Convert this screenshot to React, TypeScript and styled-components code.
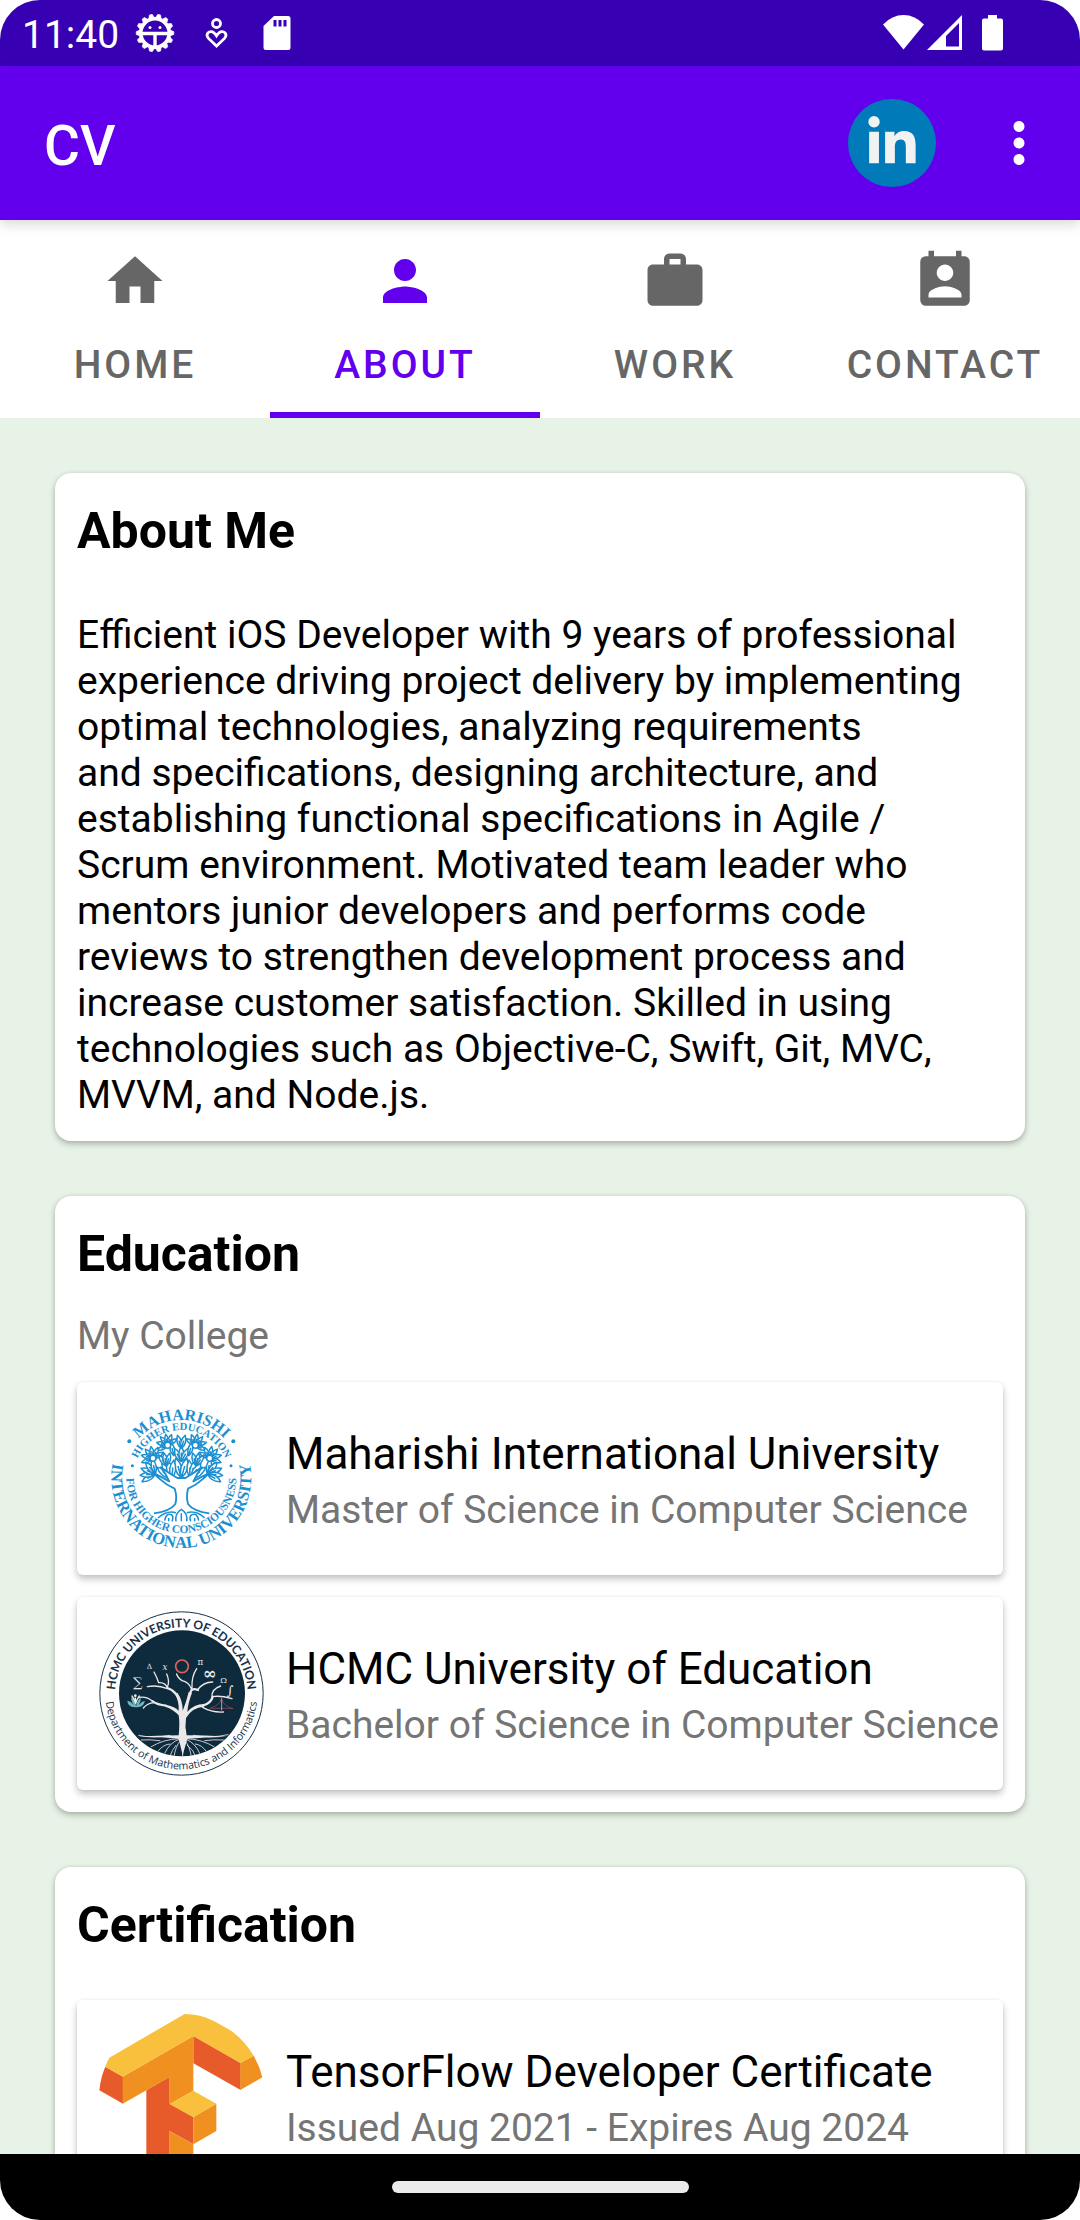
import React from "react";
import styled, { createGlobalStyle } from "styled-components";
import {
  MdHome,
  MdPerson,
  MdWork,
  MdPermContactCalendar,
  MdMoreVert,
} from "react-icons/md";
import { FaLinkedinIn } from "react-icons/fa";

const GlobalStyle = createGlobalStyle`
  *, *::before, *::after { box-sizing: border-box; }
  html, body { margin: 0; background: #fff; }
  body, button { font-family: Roboto, "Liberation Sans", sans-serif; }
  h1, h2, h3, p, ul { margin: 0; padding: 0; font-weight: 400; }
`;

const Screen = styled.div`
  height: 100vh;
  display: flex;
  flex-direction: column;
  overflow: hidden;
  border-radius: 40px;
  background: #e8f3e7;
  color: #000;
`;

const StatusBar = styled.div`
  height: 66px;
  flex: none;
  display: flex;
  align-items: center;
  justify-content: space-between;
  padding: 0 66px 0 22px;
  background: #3700b3;
  color: #fff;
`;

const StatusGroup = styled.div`
  display: flex;
  align-items: center;
`;

const Clock = styled.time`
  padding-top: 3px;
  margin-right: 16px;
  font-size: 39px;
  line-height: 46px;
`;

const Notifications = styled.div`
  display: flex;
  gap: 21px;
`;

const AppBar = styled.header`
  height: 154px;
  flex: none;
  position: relative;
  z-index: 1;
  display: flex;
  align-items: center;
  justify-content: space-between;
  padding: 0 28px 0 44px;
  background: #6200ee;
  color: #fff;
  box-shadow: 0 4px 12px rgba(0, 0, 0, 0.16);
`;

const AppTitle = styled.h1`
  padding-top: 6px;
  font-size: 55px;
  line-height: 64px;
  font-weight: 500;
`;

const Actions = styled.div`
  display: flex;
  align-items: center;
  gap: 50px;
`;

const ProfileLink = styled.a`
  width: 88px;
  height: 88px;
  display: grid;
  place-items: center;
  border-radius: 50%;
  background: #007ab9;
  color: #f1f2f2;
`;

const MenuButton = styled.button`
  display: flex;
  padding: 0;
  border: 0;
  background: none;
  color: inherit;
`;

const TabList = styled.nav`
  flex: none;
  display: grid;
  grid-template-columns: repeat(4, 1fr);
  background: #fff;
`;

const Tab = styled.button<{ $active: boolean }>`
  height: 198px;
  display: flex;
  flex-direction: column;
  align-items: center;
  gap: 28px;
  padding: 28px 0 0;
  border: 0;
  border-bottom: 6px solid ${(p) => (p.$active ? "#6200ee" : "transparent")};
  background: none;
  color: ${(p) => (p.$active ? "#6200ee" : "#666")};
  font-size: 39px;
  line-height: 46px;
  font-weight: 500;
  letter-spacing: 3px;
  text-transform: uppercase;
`;

const Content = styled.main`
  flex: 1;
  min-height: 0;
  overflow-y: auto;
  scrollbar-width: none;
  display: flex;
  flex-direction: column;
  gap: 55px;
  padding: 55px;
`;

const Card = styled.section`
  flex: none;
  padding: 25px 22px 22px;
  border-radius: 16px;
  background: #fff;
  box-shadow: 0 3px 6px rgba(0, 0, 0, 0.25), 0 0 4px rgba(0, 0, 0, 0.08);
`;

const CardTitle = styled.h2`
  font-size: 50px;
  line-height: 66px;
  font-weight: 700;
`;

const Summary = styled.p`
  margin: 48px 0 1px;
  font-size: 39px;
  line-height: 46px;
`;

const Caption = styled.p`
  margin-top: 26px;
  color: #757575;
  font-size: 39px;
  line-height: 46px;
`;

const Entries = styled.ul<{ $offset: number }>`
  margin-top: ${(p) => p.$offset}px;
  display: flex;
  flex-direction: column;
  gap: 22px;
  list-style: none;
`;

const Entry = styled.li`
  display: flex;
  align-items: center;
  gap: 22px;
  padding: 14px 0 14px 22px;
  border-radius: 6px;
  background: #fff;
  box-shadow: 0 4px 7px rgba(0, 0, 0, 0.24), 0 0 3px rgba(0, 0, 0, 0.06);
`;

const EntryText = styled.div`
  display: flex;
  flex-direction: column;
  gap: 4px;
  white-space: nowrap;
`;

const EntryTitle = styled.h3`
  font-size: 44px;
  line-height: 58px;
`;

const EntryDetail = styled.p`
  color: #757575;
  font-size: 39px;
  line-height: 46px;
`;

const Logo = styled.svg`
  width: 165px;
  height: 165px;
  flex: none;
`;

const GestureBar = styled.div`
  height: 66px;
  flex: none;
  display: grid;
  place-items: center;
  background: #000;
`;

const GestureHandle = styled.div`
  width: 297px;
  height: 12px;
  border-radius: 6px;
  background: #ebebeb;
`;

/* ---- status icons ---- */

const BugGearIcon = () => (
  <svg width="40" height="40" viewBox="0 0 40 40" fill="none" stroke="#fff">
    {Array.from({ length: 14 }, (_, i) => (
      <path
        key={i}
        d="M17 5 L18.6 1.2 H21.4 L23 5 Z"
        fill="#fff"
        strokeWidth="0.6"
        transform={`rotate(${(i + 0.5) * (360 / 14)} 20 20)`}
      />
    ))}
    <circle cx="20" cy="20" r="14.2" strokeWidth="3.6" />
    <path d="M6 20.5 H34 M20 21 V35" strokeWidth="3.4" />
    <circle cx="15" cy="14.5" r="1.5" fill="#fff" stroke="none" />
    <circle cx="25" cy="14.5" r="1.5" fill="#fff" stroke="none" />
  </svg>
);

const HeartPersonIcon = () => (
  <svg width="40" height="40" viewBox="0 0 40 40" fill="none" stroke="#fff" strokeWidth="2.8">
    <circle cx="20.5" cy="10.5" r="4" />
    <path d="M20.500 33 L12.500 25.400 C9.300 21.800 12 18.200 15.500 18.600 C17.900 19 19.100 20.600 20.500 22.800 C21.900 20.600 23.100 19 25.500 18.600 C29 18.200 31.700 21.800 28.500 25.400 Z" />
  </svg>
);

const SdCardIcon = () => (
  <svg width="40" height="40" viewBox="0 0 40 40">
    <path
      fill="#fff"
      fillRule="evenodd"
      d="M17 3 H31 Q33.5 3 33.5 5.5 V34.500 Q33.500 37 31 37 H9 Q6.500 37 6.500 34.500 V13 Z M16.500 7 V13.500 H19.500 V7 Z M21.500 7 V13.500 H24.500 V7 Z M26.500 7 V13.500 H29.500 V7 Z"
    />
  </svg>
);

const WifiIcon = () => (
  <svg width="44" height="44" viewBox="0 0 44 44">
    <path fill="#fff" d="M1 13.500 Q10 4 21.500 4 Q33 4 42 13.500 L21.500 38.500 Z" />
  </svg>
);

const SignalIcon = () => (
  <svg width="44" height="44" viewBox="0 0 44 44">
    <path
      fill="#fff"
      fillRule="evenodd"
      d="M1 39 L36 4 V39 Z M20 25 V35.500 H33 V12 Z"
    />
  </svg>
);

const BatteryIcon = () => (
  <svg width="44" height="44" viewBox="0 0 44 44">
    <path
      fill="#fff"
      d="M18 4 H27 V7.500 H31 Q33 7.500 33 9.500 V37.500 Q33 39.500 31 39.500 H14 Q12 39.500 12 37.500 V9.500 Q12 7.500 14 7.500 H18 Z"
    />
  </svg>
);

/* ---- logos ---- */

type Fan = { x: number; y: number; size: number; angles: number[] };

const FANS: Fan[] = [
  { x: 334, y: 324, size: 62, angles: [-16, 16] },
  { x: 334, y: 275, size: 46, angles: [-28, 0, 28] },
  { x: 334, y: 236, size: 42, angles: [-16, 16] },
  { x: 312, y: 258, size: 42, angles: [-14] },
  { x: 356, y: 258, size: 42, angles: [14] },
  { x: 293, y: 226, size: 34, angles: [-115, -75, -40, -10, 20, 55] },
  { x: 376, y: 226, size: 34, angles: [-55, -20, 10, 40, 75, 115] },
  { x: 249, y: 265, size: 36, angles: [-110, -75, -40, -10, 25, 60] },
  { x: 419, y: 265, size: 36, angles: [-60, -25, 10, 40, 75, 110] },
  { x: 256, y: 312, size: 46, angles: [-120, -95, -68, -40, -12] },
  { x: 412, y: 312, size: 46, angles: [12, 40, 68, 95, 120] },
  { x: 305, y: 326, size: 56, angles: [-52, -32, -12, 6] },
  { x: 363, y: 326, size: 56, angles: [-6, 12, 32, 52] },
  { x: 290, y: 288, size: 40, angles: [-36, -12, 14] },
  { x: 378, y: 288, size: 40, angles: [-14, 12, 36] },
];

const leafPath = (s: number) =>
  `M0 0 C${-s * 0.26} ${-s * 0.4} ${-s * 0.18} ${-s * 0.72} 0 ${-s} C${s * 0.18} ${-s * 0.72} ${s * 0.26} ${-s * 0.4} 0 0 M0 0 V${-s * 0.6}`;

const MaharishiLogo = () => (
  <Logo viewBox="87 78 495 495" role="img" aria-label="Maharishi International University seal">
    <defs>
      <path id="miu-outer-top" d="M160 324 A174 174 0 0 1 508 324" />
      <path id="miu-outer-bottom" d="M334 114 A210 210 0 0 0 334 534 A210 210 0 0 0 334 114" />
      <path id="miu-inner-top" d="M190 324 A144 144 0 0 1 478 324" />
      <path id="miu-inner-bottom" d="M334 159 A165 165 0 0 0 334 489 A165 165 0 0 0 334 159" />
    </defs>
    <g
      fill="#1c8fd0"
      fontFamily='"Liberation Serif", serif'
      fontWeight="700"
      textAnchor="middle"
    >
      <text fontSize="48">
        <textPath href="#miu-outer-top" startOffset="50%">MAHARISHI</textPath>
      </text>
      <text fontSize="50">
        <textPath href="#miu-outer-bottom" startOffset="50%">INTERNATIONAL UNIVERSITY</textPath>
      </text>
      <text fontSize="32">
        <textPath href="#miu-inner-top" startOffset="50%">HIGHER EDUCATION</textPath>
      </text>
      <text fontSize="34">
        <textPath href="#miu-inner-bottom" startOffset="50%">FOR HIGHER CONSCIOUSNESS</textPath>
      </text>
      <circle cx="178" cy="214" r="6" />
      <circle cx="490" cy="214" r="6" />
      <circle cx="187" cy="287" r="4.500" />
      <circle cx="483" cy="287" r="4.500" />
    </g>
    <g fill="#fff" stroke="#1c8fd0" strokeWidth="4.500" strokeLinejoin="round">
      {FANS.map((fan) =>
        fan.angles.map((angle) => (
          <path
            key={`${fan.x}-${fan.y}-${angle}`}
            d={leafPath(fan.size)}
            transform={`translate(${fan.x} ${fan.y}) rotate(${angle})`}
          />
        ))
      )}
      <path
        strokeWidth="5.500"
        d="M252 430 Q300 424 316 402 Q322 380 314 356 Q290 346 268 326 L248 308 Q276 322 298 334 Q286 308 272 292 Q300 312 322 324 H346 Q368 312 396 292 Q382 308 370 334 Q392 322 420 308 L400 326 Q378 346 354 356 Q348 380 354 402 Q370 424 418 430"
      />
      <circle cx="293" cy="226" r="9" />
      <circle cx="376" cy="226" r="9" />
      <circle cx="249" cy="265" r="9" />
      <circle cx="419" cy="265" r="9" />
      <path
        fill="none"
        strokeWidth="4.500"
        d="M264 444 Q290 420 318 428 M284 452 Q288 428 304 434 Q312 440 306 454 M318 454 Q314 430 334 418 Q354 430 350 454 M334 454 V430 M362 454 Q356 440 366 434 Q382 428 386 452 M404 444 Q380 420 350 428 M296 454 V444 M374 454 V444"
      />
    </g>
  </Logo>
);

const HcmcLogo = () => (
  <Logo viewBox="87 63 495 495" role="img" aria-label="HCMC University of Education seal">
    <defs>
      <path id="hcmc-top" d="M334 510 A199 199 0 0 1 334 112 A199 199 0 0 1 334 510" />
      <path id="hcmc-bottom" d="M334 82 A228 228 0 0 0 334 538 A228 228 0 0 0 334 82" />
      <clipPath id="hcmc-disc">
        <circle cx="336" cy="310" r="189" />
      </clipPath>
    </defs>
    <circle cx="334.500" cy="310.500" r="245" fill="#fff" stroke="#17304a" strokeWidth="3" />
    <circle cx="336" cy="310" r="189" fill="#0d2b3d" />
    <g fill="#17304a" textAnchor="middle">
      <text fontSize="36" fontFamily="Lato, sans-serif" fontWeight="700">
        <textPath href="#hcmc-top" startOffset="50%">HCMC UNIVERSITY OF EDUCATION</textPath>
      </text>
      <text fontSize="32" fontFamily='"Open Sans", sans-serif'>
        <textPath href="#hcmc-bottom" startOffset="50%">Department of Mathematics and Informatics</textPath>
      </text>
    </g>
    <g clipPath="url(#hcmc-disc)" fill="none" stroke="#ece8ea" strokeLinecap="round">
      <path
        fill="#ece8ea"
        stroke="none"
        d="M326 436 Q330 400 326 376 Q310 358 286 350 L290 345 Q314 350 326 362 Q328 334 314 312 L322 308 Q338 330 338 362 Q346 344 356 306 L366 308 Q354 340 352 366 Q372 342 402 342 L402 350 Q366 352 348 384 Q344 410 350 436 Q400 436 470 440 Q400 442 352 446 L338 496 L326 446 Q280 440 204 440 Q290 436 326 436 Z"
      />
      <path
        strokeWidth="7"
        d="M318 312 Q306 298 292 294 M361 308 Q364 292 384 300 M288 347 Q262 344 248 334 M400 346 Q424 338 428 320"
      />
      <path
        strokeWidth="4"
        d="M294 296 Q286 276 266 278 Q260 260 252 246 M292 296 Q264 284 232 290 M292 292 Q300 274 290 252 M364 296 Q356 276 336 272 Q322 262 320 252 M366 294 Q364 260 380 236 M382 300 Q400 276 428 276 M248 334 Q230 318 206 322 M252 338 Q232 340 220 354 M426 320 Q424 298 452 288 M428 320 Q450 316 486 326 M398 352 Q426 368 460 366"
      />
      <path
        strokeWidth="2.500"
        d="M328 448 Q300 456 284 490 M332 450 Q316 470 312 500 M338 450 V500 M344 450 Q360 470 364 500 M348 448 Q376 458 390 492 M326 446 Q280 448 244 470 M350 446 Q396 448 432 470 M300 462 Q280 462 262 486 M376 462 Q396 464 410 486 M270 452 Q240 448 214 450 M404 452 Q430 448 462 450 M318 466 Q306 480 300 498 M352 466 Q372 480 376 498 M206 436 Q250 446 300 436 M370 436 Q420 446 474 434"
      />
      <circle cx="336" cy="229" r="19" stroke="#d9625c" strokeWidth="5" />
      <path stroke="#a4505a" strokeWidth="2" d="M422 354 Q450 346 454 326 Q462 350 488 356 M422 355 H488" />
      <path strokeWidth="2" d="M455 326 V360" />
      <path
        fill="#6fb6bd"
        stroke="none"
        d="M194 352 Q172 350 172 332 Q184 334 192 346 Q182 332 184 322 Q198 334 198 350 Q200 334 212 322 Q214 334 206 346 Q214 334 224 332 Q224 350 202 352 Z"
      />
      <path strokeWidth="4" d="M197 340 Q192 326 186 318 M197 340 Q200 328 208 318 M196 334 V324" />
      <circle cx="196" cy="317" r="4" fill="#ece8ea" stroke="none" />
    </g>
    <g fill="#ece8ea" fontFamily='"DejaVu Serif", serif' textAnchor="middle">
      <text x="238" y="236" fontSize="22">Δ</text>
      <text x="285" y="241" fontSize="26" fontStyle="italic">x</text>
      <text x="391" y="226" fontSize="26">π</text>
      <text x="419" y="267" fontSize="50" fontWeight="700">∞</text>
      <text x="461" y="280" fontSize="24">Ω</text>
      <text x="480" y="316" fontSize="38">∫</text>
      <text x="203" y="291" fontSize="40">∑</text>
    </g>
  </Logo>
);

const TensorFlowLogo = () => (
  <Logo viewBox="116 102 495 495" role="img" aria-label="TensorFlow logo">
    <path fill="#e75b2b" d="M135 260 L188 290 V371 L117 331 Q121 292 135 260 Z" />
    <path fill="#e75b2b" d="M258 331 L328 290 V371 L399 411 V493 L328 453 V590 L258 550 Z" />
    <path fill="#e75b2b" d="M399 168 L541 249 V330 L399 250 Z" />
    <path fill="#f09020" d="M187 290 L399 168 V332 L328 373 V291 L187 371 Z" />
    <path fill="#f09020" d="M399 411 L468 371 V453 L399 493 Z M328 453 L399 493 V550 L328 590 Z" />
    <path fill="#f09020" d="M540 249 L580 227 Q598 258 606 292 L540 330 Z" />
    <path
      fill="#f8c03c"
      d="M147 233 L373 102 Q420 102 462 124 L510 151 Q550 178 580 227 L540 249 L399 168 L187 290 L135 260 Q140 245 147 233 Z M328 373 L399 332 L468 371 L399 411 Z"
    />
  </Logo>
);

/* ---- page ---- */

const TABS = [
  { label: "Home", Icon: MdHome },
  { label: "About", Icon: MdPerson },
  { label: "Work", Icon: MdWork },
  { label: "Contact", Icon: MdPermContactCalendar },
];

const SCHOOLS = [
  {
    title: "Maharishi International University",
    detail: "Master of Science in Computer Science",
    LogoArt: MaharishiLogo,
  },
  {
    title: "HCMC University of Education",
    detail: "Bachelor of Science in Computer Science",
    LogoArt: HcmcLogo,
  },
];

const CERTIFICATES = [
  {
    title: "TensorFlow Developer Certificate",
    detail: "Issued Aug 2021 - Expires Aug 2024",
    LogoArt: TensorFlowLogo,
  },
];

const EntryList = ({ items, offset }: { items: typeof SCHOOLS; offset: number }) => (
  <Entries $offset={offset}>
    {items.map(({ title, detail, LogoArt }) => (
      <Entry key={title}>
        <LogoArt />
        <EntryText>
          <EntryTitle>{title}</EntryTitle>
          <EntryDetail>{detail}</EntryDetail>
        </EntryText>
      </Entry>
    ))}
  </Entries>
);

export default function App() {
  const [active, setActive] = React.useState("About");

  return (
    <>
      <GlobalStyle />
      <Screen>
        <StatusBar>
          <StatusGroup>
            <Clock>11:40</Clock>
            <Notifications>
              <BugGearIcon />
              <HeartPersonIcon />
              <SdCardIcon />
            </Notifications>
          </StatusGroup>
          <StatusGroup>
            <WifiIcon />
            <SignalIcon />
            <BatteryIcon />
          </StatusGroup>
        </StatusBar>
        <AppBar>
          <AppTitle>CV</AppTitle>
          <Actions>
            <ProfileLink href="#linkedin" aria-label="LinkedIn profile">
              <FaLinkedinIn size={54} />
            </ProfileLink>
            <MenuButton type="button" aria-label="More options">
              <MdMoreVert size={66} />
            </MenuButton>
          </Actions>
        </AppBar>
        <TabList>
          {TABS.map(({ label, Icon }) => (
            <Tab
              key={label}
              type="button"
              $active={label === active}
              aria-pressed={label === active}
              onClick={() => setActive(label)}
            >
              <Icon size={66} />
              {label}
            </Tab>
          ))}
        </TabList>
        <Content>
          <Card>
            <CardTitle>About Me</CardTitle>
            <Summary>
              Efficient iOS Developer with 9 years of professional experience
              driving project delivery by implementing optimal technologies,
              analyzing requirements and{"\u00a0"}specifications, designing
              architecture, and establishing functional specifications in Agile
              / Scrum environment. Motivated team leader who mentors junior
              developers and performs code reviews to strengthen development
              process and increase customer satisfaction. Skilled in using
              technologies such as Objective-C, Swift, Git, MVC, MVVM, and
              Node.js.
            </Summary>
          </Card>
          <Card>
            <CardTitle>Education</CardTitle>
            <Caption>My College</Caption>
            <EntryList items={SCHOOLS} offset={23} />
          </Card>
          <Card>
            <CardTitle>Certification</CardTitle>
            <EntryList items={CERTIFICATES} offset={42} />
          </Card>
        </Content>
        <GestureBar>
          <GestureHandle />
        </GestureBar>
      </Screen>
    </>
  );
}
